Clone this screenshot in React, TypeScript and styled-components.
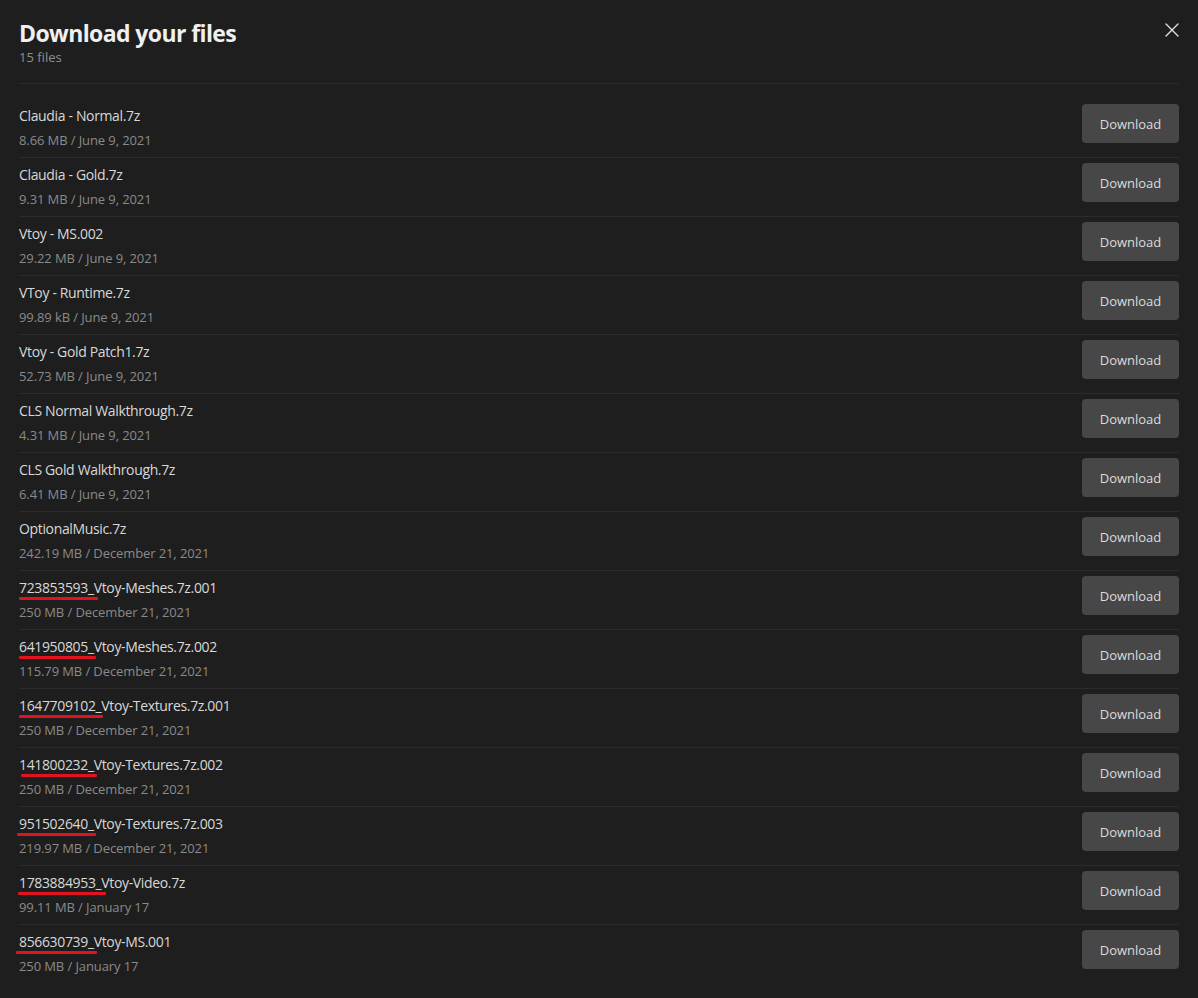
import React from "react";
import styled, { createGlobalStyle } from "styled-components";

const Global = createGlobalStyle`
  html, body { margin: 0; padding: 0; background: #1e1e1e; }
  body { font-family: "Segoe UI", "Open Sans", "Noto Sans", sans-serif; color: #d6d6d6; }
  * { box-sizing: border-box; }
`;

const Modal = styled.div`
  width: 1198px;
  min-height: 998px;
  background: #1e1e1e;
  padding: 0 19px;
  position: relative;
`;

const Header = styled.header`
  display: flex;
  justify-content: space-between;
  align-items: flex-start;
  padding-top: 19px;
  height: 84px;
  border-bottom: 1px solid #2c2c2c;
`;

const TitleBlock = styled.div`
  display: flex;
  flex-direction: column;
`;

const Title = styled.h1`
  margin: 0;
  font-size: 23px;
  line-height: 29px;
  font-weight: 700;
  color: #f0f0f0;
  letter-spacing: -0.6px;
`;

const Count = styled.div`
  font-size: 13px;
  line-height: 18px;
  color: #8e8e8e;
`;

const CloseButton = styled.button`
  background: none;
  border: none;
  padding: 0;
  margin-top: 4px;
  width: 14px;
  height: 14px;
  display: flex;
  cursor: pointer;
  color: #e0e0e0;
`;

const List = styled.ul`
  list-style: none;
  margin: 0;
  padding: 15px 0 0;
`;

const Row = styled.li`
  display: flex;
  justify-content: space-between;
  align-items: flex-start;
  height: 58px;
  padding: 5px 0 0;
  & + & {
    height: 59px;
    border-top: 1px solid #2c2c2c;
  }
`;

const Info = styled.div`
  display: flex;
  flex-direction: column;
  padding-top: 2px;
`;

const Name = styled.div`
  font-size: 14px;
  line-height: 20px;
  letter-spacing: -0.35px;
  color: #d8d8d8;
`;

const Meta = styled.div`
  font-size: 13px;
  line-height: 20px;
  margin-top: 4px;
  letter-spacing: -0.1px;
  color: #8a8a8a;
`;

const Marked = styled.span<{ $dx: number; $w: number; $dy: number }>`
  position: relative;
  &::after {
    content: "";
    position: absolute;
    left: ${(p) => p.$dx}px;
    width: ${(p) => p.$w}px;
    bottom: ${(p) => p.$dy}px;
    height: 3px;
    border-radius: 1px;
    background: #e0131f;
  }
`;

const DownloadButton = styled.button`
  width: 97px;
  height: 39px;
  flex-shrink: 0;
  border: none;
  border-radius: 4px;
  background: #474747;
  color: #dcdcdc;
  font-family: inherit;
  font-size: 13px;
  cursor: pointer;
`;

type FileItem = {
  name: string;
  meta: string;
  mark?: { prefix: string; dx: number; w: number; dy: number };
};

const files: FileItem[] = [
  { name: "Claudia - Normal.7z", meta: "8.66 MB / June 9, 2021" },
  { name: "Claudia - Gold.7z", meta: "9.31 MB / June 9, 2021" },
  { name: "Vtoy - MS.002", meta: "29.22 MB / June 9, 2021" },
  { name: "VToy - Runtime.7z", meta: "99.89 kB / June 9, 2021" },
  { name: "Vtoy - Gold Patch1.7z", meta: "52.73 MB / June 9, 2021" },
  { name: "CLS Normal Walkthrough.7z", meta: "4.31 MB / June 9, 2021" },
  { name: "CLS Gold Walkthrough.7z", meta: "6.41 MB / June 9, 2021" },
  { name: "OptionalMusic.7z", meta: "242.19 MB / December 21, 2021" },
  { name: "Vtoy-Meshes.7z.001", meta: "250 MB / December 21, 2021", mark: { prefix: "723853593_", dx: 0, w: 79, dy: -3 } },
  { name: "Vtoy-Meshes.7z.002", meta: "115.79 MB / December 21, 2021", mark: { prefix: "641950805_", dx: 0, w: 77, dy: -3 } },
  { name: "Vtoy-Textures.7z.001", meta: "250 MB / December 21, 2021", mark: { prefix: "1647709102_", dx: 0, w: 84, dy: -3 } },
  { name: "Vtoy-Textures.7z.002", meta: "250 MB / December 21, 2021", mark: { prefix: "141800232_", dx: 2, w: 76, dy: -3 } },
  { name: "Vtoy-Textures.7z.003", meta: "219.97 MB / December 21, 2021", mark: { prefix: "951502640_", dx: -2, w: 79, dy: -3 } },
  { name: "Vtoy-Video.7z", meta: "99.11 MB / January 17", mark: { prefix: "1783884953_", dx: -1, w: 88, dy: -3 } },
  { name: "Vtoy-MS.001", meta: "250 MB / January 17", mark: { prefix: "856630739_", dx: -3, w: 81, dy: -3 } },
];

export default function App() {
  return (
    <>
      <Global />
      <Modal>
        <Header>
          <TitleBlock>
            <Title>Download your files</Title>
            <Count>15 files</Count>
          </TitleBlock>
          <CloseButton aria-label="Close">
            <svg width="14" height="14" viewBox="0 0 14 14" fill="none">
              <path d="M1 1L13 13M13 1L1 13" stroke="currentColor" strokeWidth="1.4" strokeLinecap="round" />
            </svg>
          </CloseButton>
        </Header>
        <List>
          {files.map((f) => (
            <Row key={(f.mark?.prefix ?? "") + f.name}>
              <Info>
                <Name>
                  {f.mark ? (
                    <Marked $dx={f.mark.dx} $w={f.mark.w} $dy={f.mark.dy}>
                      {f.mark.prefix}
                    </Marked>
                  ) : null}
                  {f.name}
                </Name>
                <Meta>{f.meta}</Meta>
              </Info>
              <DownloadButton>Download</DownloadButton>
            </Row>
          ))}
        </List>
      </Modal>
    </>
  );
}
